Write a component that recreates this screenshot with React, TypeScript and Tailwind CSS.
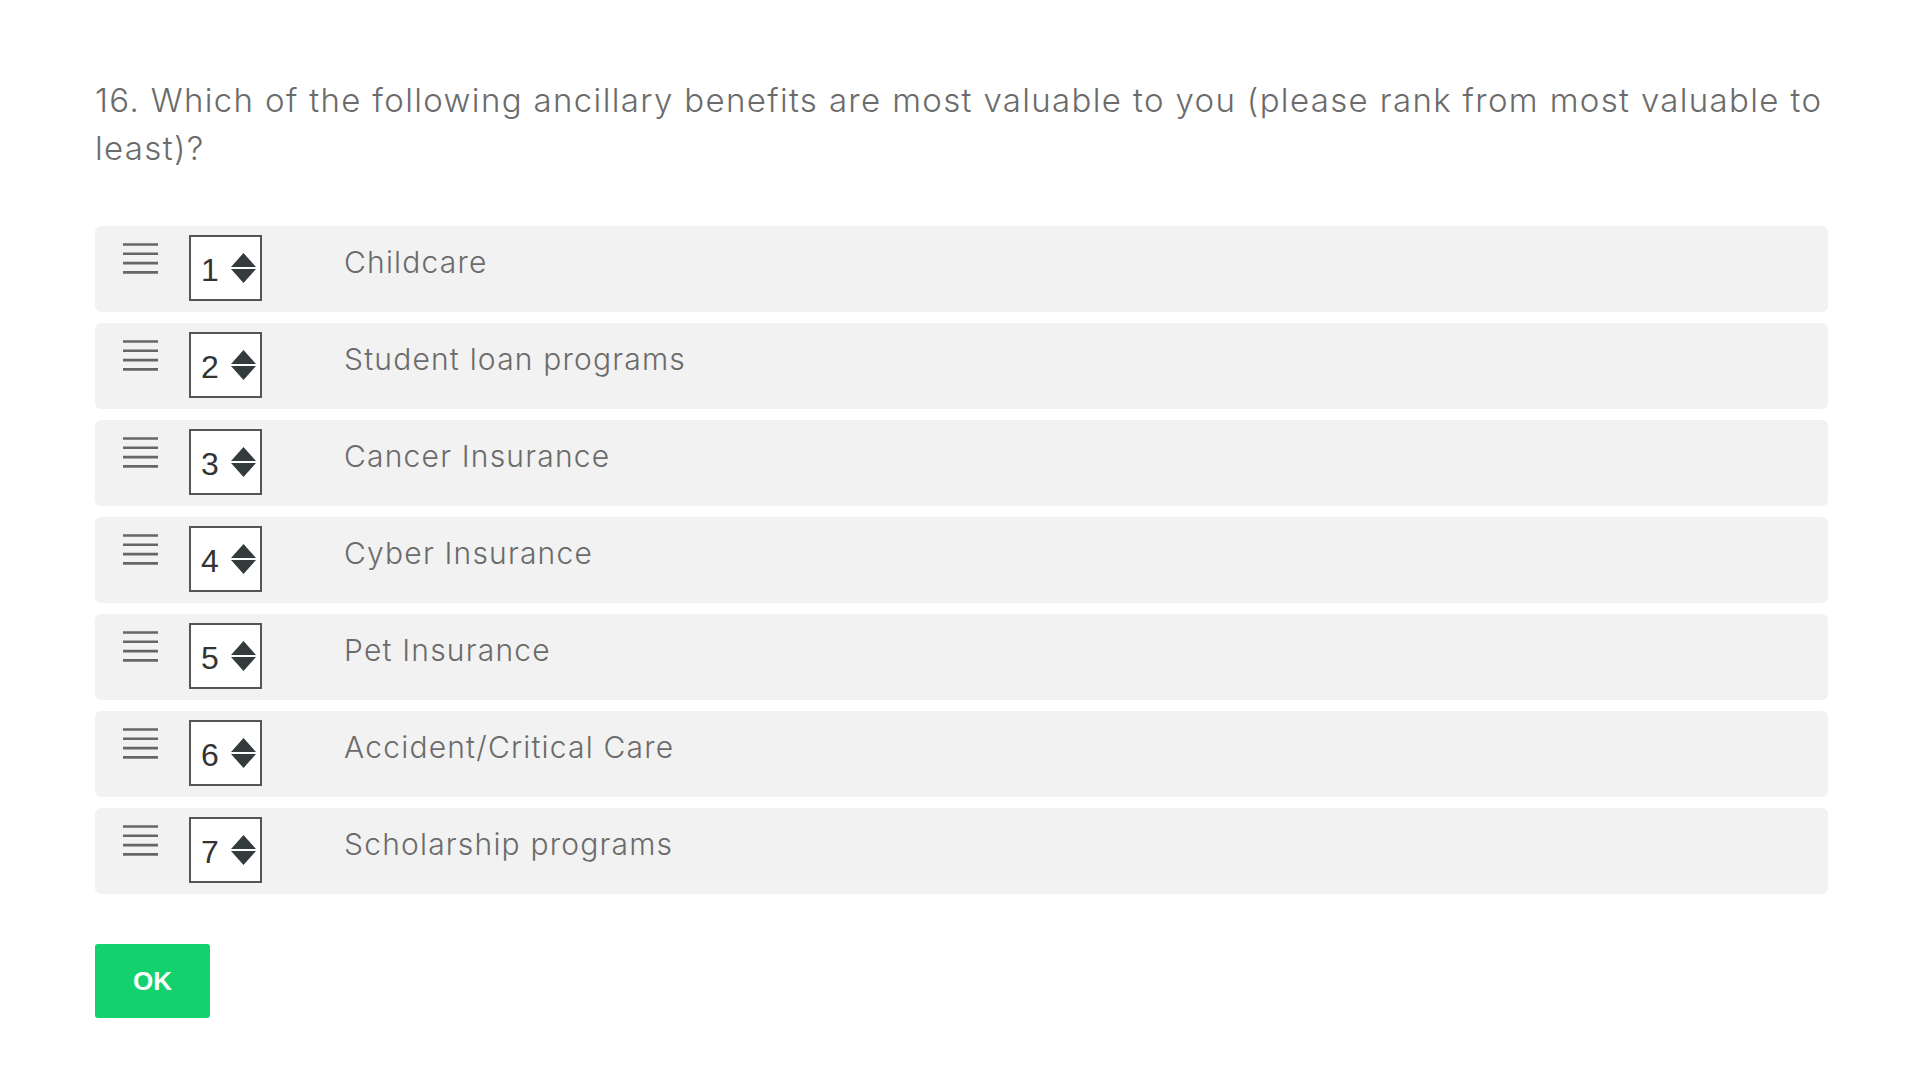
import React from 'react';

const OPTIONS = [
    'Childcare',
    'Student loan programs',
    'Cancer Insurance',
    'Cyber Insurance',
    'Pet Insurance',
    'Accident/Critical Care',
    'Scholarship programs',
];

const DragHandle: React.FC = () => (
    <svg width="35" height="32" viewBox="0 0 35 32" fill="none" className="shrink-0">
        <line x1="0" y1="1.5" x2="35" y2="1.5" stroke="#666666" strokeWidth="2.6" />
        <line x1="0" y1="10.8" x2="35" y2="10.8" stroke="#666666" strokeWidth="2.6" />
        <line x1="0" y1="20.1" x2="35" y2="20.1" stroke="#666666" strokeWidth="2.6" />
        <line x1="0" y1="29.4" x2="35" y2="29.4" stroke="#666666" strokeWidth="2.6" />
    </svg>
);

const Spinner: React.FC = () => (
    <svg width="25" height="30" viewBox="0 0 25 30" fill="none" className="shrink-0">
        <path d="M12.5 0 L25 14 L0 14 Z" fill="#333b3d" />
        <path d="M0 16 L25 16 L12.5 30 Z" fill="#333b3d" />
    </svg>
);

const RankRow: React.FC<{ rank: number; label: string }> = ({ rank, label }) => (
    <div className="flex items-start h-[86px] rounded-md bg-[#f2f2f2] pl-[28px] pt-[9px]">
        <div className="mt-[8px]">
            <DragHandle />
        </div>
        <div className="ml-[31px] w-[73px] h-[66px] border-2 border-[#555555] bg-white flex items-center pl-[10px] pr-[4px] justify-between">
            <span className="text-[32px] leading-none text-[#333333] mt-[3px]" style={{ fontFamily: '"Liberation Sans", Arial, sans-serif' }}>
                {rank}
            </span>
            <Spinner />
        </div>
        <span className="ml-[82px] mt-[9px] text-[30px] leading-[36px] font-light tracking-[1.2px] text-[#6b6b6b]">{label}</span>
    </div>
);

export default function App() {
    return (
        <div className="min-h-screen bg-white pl-[95px] pr-[92px] pt-[76px]" style={{ fontFamily: 'Inter, "Open Sans", sans-serif' }}>
            <h1 className="text-[33px] leading-[48px] font-light tracking-[1.35px] text-[#6b6b6b]">
                16. Which of the following ancillary benefits are most valuable to you (please rank from most valuable to least)?
            </h1>
            <div className="mt-[54px] flex flex-col gap-[11px]">
                {OPTIONS.map((opt, i) => (
                    <RankRow key={opt} rank={i + 1} label={opt} />
                ))}
            </div>
            <button
                className="mt-[50px] w-[115px] h-[74px] rounded-[3px] bg-[#13d16d] text-white text-[26px] font-bold"
                style={{ fontFamily: '"Liberation Sans", Arial, sans-serif' }}
            >
                OK
            </button>
        </div>
    );
}
